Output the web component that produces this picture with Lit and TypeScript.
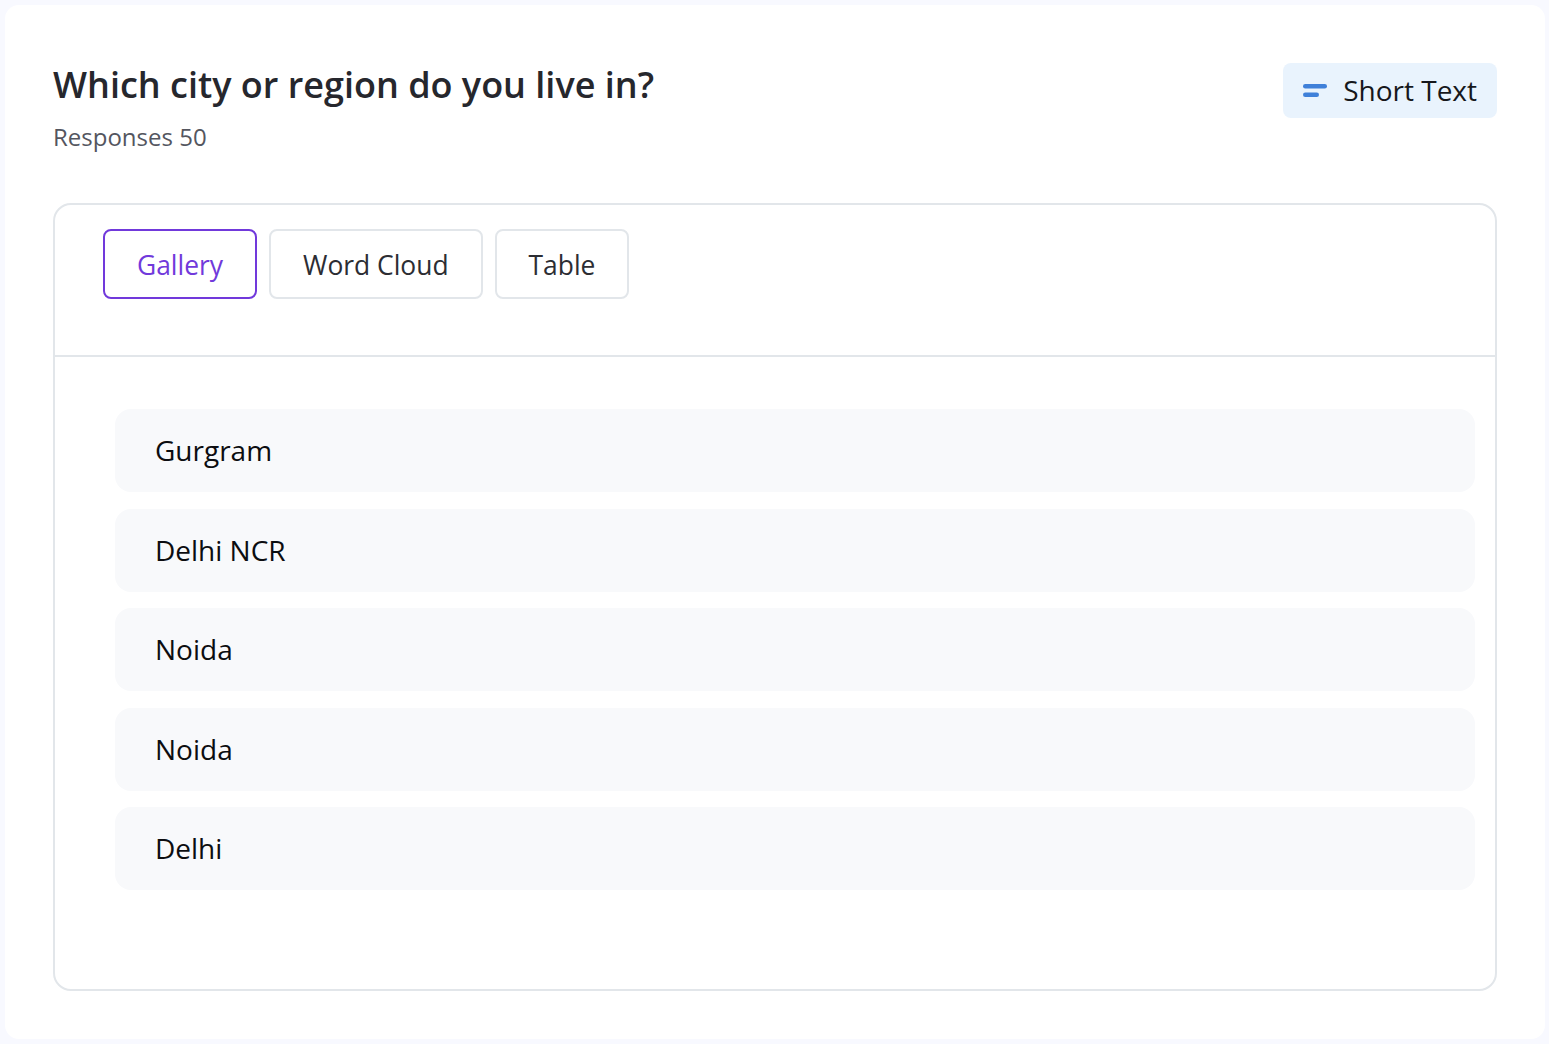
import { LitElement, html, css } from "lit";
import { customElement } from "lit/decorators.js";

@customElement("app-root")
export class AppRoot extends LitElement {
  static styles = css`
    :host { display: block; height: 1044px; box-sizing: border-box; padding: 5px 4px 5px 5px; background: #f8f9ff; font-family: "Open Sans", sans-serif; overflow: hidden; }
    .card { box-sizing: border-box; height: 1034px; background: #fff; border-radius: 14px; padding: 58px 48px 48px; display: flex; flex-direction: column; }
    .head { display: flex; justify-content: space-between; align-items: flex-start; height: 140px; flex: none; }
    h1 { margin: 0; font-size: 36px; line-height: 44px; font-weight: 600; color: #26272d; }
    .sub { margin-top: 14px; font-size: 24px; line-height: 32px; color: #54565f; }
    .badge { display: flex; align-items: center; gap: 16px; height: 55px; box-sizing: border-box; padding: 0 20px 2px; background: #e9f3fd; border-radius: 8px; font-size: 28px; color: #16171b; }
    .badge svg { margin-top: 2px; }
    .panel { flex: 1; border: 2px solid #e2e6ea; border-radius: 18px; display: flex; flex-direction: column; }
    .tabs { display: flex; gap: 12px; height: 152px; box-sizing: border-box; padding: 24px 48px 0; border-bottom: 2px solid #e2e6ea; flex: none; align-items: flex-start; }
    .tab { height: 70px; box-sizing: border-box; padding: 2px 32px 0; display: flex; align-items: center; border: 2px solid #e2e6ea; border-radius: 8px; font-size: 26.4px; color: #2c2d33; }
    .tab.active { border-color: #7139db; color: #7139db; }
    .list { display: flex; flex-direction: column; gap: 16.5px; padding: 52px 20px 0 60px; }
    .row { height: 83px; box-sizing: border-box; padding: 0 40px 1px; display: flex; align-items: center; background: #f8f9fb; border-radius: 16px; font-size: 28px; color: #0c0d10; }
  `;

  render() {
    const rows = ["Gurgram", "Delhi NCR", "Noida", "Noida", "Delhi"];
    return html`<div class="card">
      <div class="head">
        <div>
          <h1>Which city or region do you live in?</h1>
          <div class="sub">Responses 50</div>
        </div>
        <div class="badge">
          <svg width="24" height="14" viewBox="0 0 24 14"><rect x="0" y="0" width="24" height="4.5" rx="2.25" fill="#3f80d9"/><rect x="0" y="8.5" width="16" height="4.5" rx="2.25" fill="#3f80d9"/></svg>
          <span>Short Text</span>
        </div>
      </div>
      <div class="panel">
        <div class="tabs">
          <div class="tab active">Gallery</div>
          <div class="tab">Word Cloud</div>
          <div class="tab">Table</div>
        </div>
        <div class="list">${rows.map((r) => html`<div class="row">${r}</div>`)}</div>
      </div>
    </div>`;
  }
}
